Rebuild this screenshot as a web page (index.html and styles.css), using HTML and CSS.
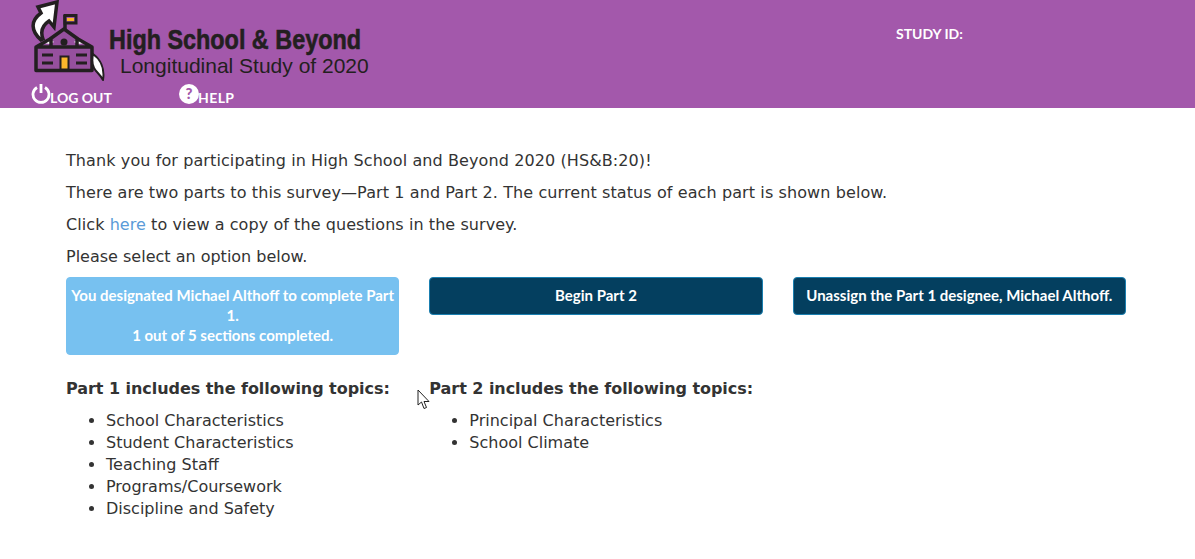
FILE: index.html
```html
<!DOCTYPE html>
<html lang="en">
<head>
<meta charset="utf-8">
<title>High School &amp; Beyond</title>
<link rel="stylesheet" href="styles.css">
</head>
<body>
<header class="banner">
  <div class="brand-col">
    <div class="brand">
      <svg class="logo" width="75" height="82" viewBox="30 0 75 82" aria-hidden="true">
        <path d="M41 40C31 31 30 21 41 13L38 7 57 2 54 27 49 21C43 25 40 31 43 39Z" fill="#fff" stroke="#231f20" stroke-width="3.500" stroke-linejoin="miter"/>
        <path d="M65 29V15" stroke="#231f20" stroke-width="3.500"/>
        <rect x="65" y="15.500" width="11" height="7.500" fill="#a358ab" stroke="#231f20" stroke-width="3"/>
        <rect x="67" y="18" width="7" height="3" fill="#fbb72c"/>
        <path d="M36 47V70.500H92V47L78 38 64 29 51 38Z" fill="#96509e"/>
        <path d="M43 43L50 39 54 42 50 44ZM85 43L78 39 74 42 78 44Z" fill="#fff"/>
        <path d="M36 47V70.500H92V47ZM36 47L50 39 64 29 78 39 92 47M51 47V39M77 47V39" fill="none" stroke="#231f20" stroke-width="3.500" stroke-linejoin="round"/>
        <circle cx="64" cy="42" r="3.500" fill="#231f20"/>
        <rect x="60.500" y="56.500" width="8" height="13" fill="#fbb72c" stroke="#231f20" stroke-width="2"/>
        <path d="M42 55H53M42 63H53M76 55H87M76 63H87" stroke="#231f20" stroke-width="3"/>
        <path d="M93 54C100 59 105 68 103 80 100 74 96 72 94 68 92 64 92 59 93 54Z" fill="#fff" stroke="#231f20" stroke-width="2" stroke-linejoin="round"/>
      </svg>
      <div class="wordmark">
        <div class="wordmark-title">High School &amp; Beyond</div>
        <div class="wordmark-sub">Longitudinal Study of 2020</div>
      </div>
    </div>
    <nav class="nav">
      <a class="nav-link" href="#">
        <svg class="nav-icon" width="20" height="20" viewBox="0 0 20 20" aria-hidden="true"><path d="M6 3.500A8 8 0 1 0 14 3.500" fill="none" stroke="#fff" stroke-width="2.800"/><path d="M10 0V9" stroke="#fff" stroke-width="2.800"/></svg>
        <span class="nav-text">LOG OUT</span>
      </a>
      <a class="nav-link" href="#">
        <svg class="nav-icon" width="20" height="20" viewBox="0 0 20 20" aria-hidden="true"><circle cx="10" cy="10" r="10" fill="#fff"/><text x="10" y="15" text-anchor="middle" class="help-mark">?</text></svg>
        <span class="nav-text nav-text-wide">HELP</span>
      </a>
    </nav>
  </div>
  <div class="study">STUDY ID:</div>
</header>
<main class="content">
  <p class="line">Thank you for participating in High School and Beyond 2020 (HS&amp;B:20)!</p>
  <p class="line">There are two parts to this survey—Part 1 and Part 2. The current status of each part is shown below.</p>
  <p class="line line-mid">Click <a class="link" href="#">here</a> to view a copy of the questions in the survey.</p>
  <p class="line line-tight">Please select an option below.</p>
  <div class="columns">
    <div class="btn btn-light">You designated Michael Althoff to complete Part 1.<br>1 out of 5 sections completed.</div>
    <div class="btn btn-dark">Begin Part 2</div>
    <div class="btn btn-dark">Unassign the Part 1 designee, Michael Althoff.</div>
    <section class="topic">
      <h2 class="topic-title">Part 1 includes the following topics:</h2>
      <ul class="topics">
        <li>School Characteristics</li>
        <li>Student Characteristics</li>
        <li>Teaching Staff</li>
        <li>Programs/Coursework</li>
        <li>Discipline and Safety</li>
      </ul>
    </section>
    <section class="topic">
      <h2 class="topic-title">Part 2 includes the following topics:</h2>
      <ul class="topics">
        <li>Principal Characteristics</li>
        <li>School Climate</li>
      </ul>
    </section>
  </div>
</main>
<svg class="cursor" width="14" height="21" viewBox="0 0 14 21" aria-hidden="true"><path d="M1 1V16L4.500 13 7 19.500 9.500 18.500 7 12.500H12Z" fill="#fff" stroke="#222" stroke-width="1"/></svg>
</body>
</html>
```
FILE: styles.css
```css
* { box-sizing: border-box; }
html, body { margin: 0; padding: 0; }
body {
  position: relative;
  min-height: 559px;
  overflow: hidden;
  background: #fff;
  color: #333;
  font-family: "DejaVu Sans", Verdana, sans-serif;
  font-size: 16px;
  line-height: 22px;
}
.banner {
  display: flex;
  height: 108px;
  background: #a358ab;
  color: #fff;
  padding-left: 30px;
}
.brand-col { width: 866px; display: flex; flex-direction: column; }
.brand { display: flex; height: 82px; }
.logo { display: block; flex: none; }
.wordmark { margin-left: 4px; padding-top: 25px; color: #231f20; }
.wordmark-title { font-family: "Liberation Sans", Arial, sans-serif; font-size: 28px; line-height: 30px; font-weight: 700; white-space: nowrap; -webkit-text-stroke: .6px #231f20; transform: scaleX(.835); transform-origin: left center; }
.wordmark-sub { margin-left: 11px; font-family: "Liberation Sans", Arial, sans-serif; font-size: 21px; line-height: 22px; white-space: nowrap; }
.nav { display: flex; padding-left: 1px; }
.nav-link { display: flex; width: 148px; color: #fff; text-decoration: none; font-family: Lato, sans-serif; font-weight: 700; font-size: 14px; line-height: 18px; }
.nav-icon { display: block; flex: none; margin-top: 2px; margin-right: -1px; }
.nav-text { padding-top: 7px; white-space: nowrap; }
.nav-text-wide { letter-spacing: .4px; }
.help-mark { font-family: Lato, sans-serif; font-weight: 900; font-size: 15px; fill: #a358ab; }
.study { padding-top: 25px; font-family: Lato, sans-serif; font-weight: 700; font-size: 14px; line-height: 18px; }
.content { padding: 42px 69px 0 66px; }
.line { margin: 0 0 10px; font-size: 16px; line-height: 22px; letter-spacing: .1px; white-space: nowrap; }
.line-mid { letter-spacing: .067px; }
.line-tight { letter-spacing: 0; }
.link { color: #5a9bd8; text-decoration: none; }
.columns { display: grid; grid-template-columns: repeat(3, 1fr); column-gap: 30px; align-items: start; margin-top: -1px; }
.btn {
  padding: 7px 2px 9px;
  border-radius: 4px;
  border: 1px solid transparent;
  color: #fff;
  font-family: Lato, sans-serif;
  font-weight: 700;
  font-size: 15px;
  line-height: 20px;
  text-align: center;
}
.btn-light { background: #77c1f0; border-color: #77c1f0; }
.btn-dark { background: #043f5f; border-color: #1a7fb0; }
.topic { padding-top: 23px; }
.topic-title { margin: 0; font-size: 16px; line-height: 22px; font-weight: 700; letter-spacing: -.05px; color: #333; white-space: nowrap; }
.topics { margin: 10px 0 0; padding-left: 40px; }
.cursor { position: absolute; left: 417px; top: 389px; }
```
